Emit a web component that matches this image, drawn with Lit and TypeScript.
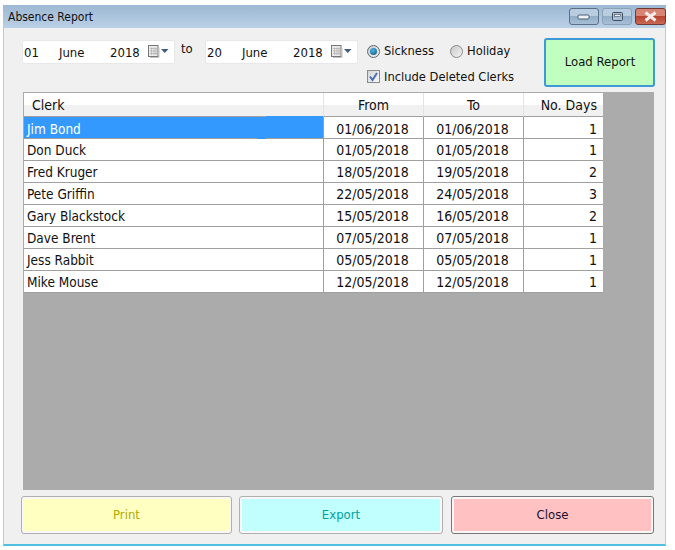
import { LitElement, html, css } from "lit";
import { customElement } from "lit/decorators.js";

const rows = [
  ["Jim Bond", "01/06/2018", "01/06/2018", "1"],
  ["Don Duck", "01/05/2018", "01/05/2018", "1"],
  ["Fred Kruger", "18/05/2018", "19/05/2018", "2"],
  ["Pete Griffin", "22/05/2018", "24/05/2018", "3"],
  ["Gary Blackstock", "15/05/2018", "16/05/2018", "2"],
  ["Dave Brent", "07/05/2018", "07/05/2018", "1"],
  ["Jess Rabbit", "05/05/2018", "05/05/2018", "1"],
  ["Mike Mouse", "12/05/2018", "12/05/2018", "1"],
];

const calendar = html`<svg class="cal" width="21" height="15" viewBox="0 0 21 15">
  <rect x="0.5" y="0.5" width="9.5" height="11" fill="#ececec" stroke="#767676"/>
  <path d="M2 3.5h7M2 6h7M2 8.5h7M3.5 2.5v7.5M6 2.5v7.5M8 2.5v7.5" stroke="#b4b4b4" stroke-width="0.8"/>
  <path d="M11 2.5v10H2" fill="none" stroke="#c4c4c4"/>
  <path d="M13 4h7.5l-3.75 4z" fill="#3f5c82"/>
</svg>`;

@customElement("app-root")
export class AppRoot extends LitElement {
  static styles = css`
    :host {
      display: block;
      width: 675px;
      height: 550px;
      background: #fff;
      font-family: "DejaVu Sans Condensed", "DejaVu Sans", sans-serif;
      font-size: 13px;
      color: #111;
      padding: 5px 0 0 3px;
      box-sizing: border-box;
    }
    .window {
      width: 663px;
      height: 541px;
      box-sizing: border-box;
      background: #f0f0f0;
      border-left: 1px solid #b5cde0;
      border-right: 1px solid #b5cde0;
      border-bottom: 2px solid #4fc1de;
      display: flex;
      flex-direction: column;
    }
    .title {
      height: 23px;
      flex: none;
      background: linear-gradient(#9db8d3, #bad0e6);
      display: flex;
      align-items: center;
      justify-content: space-between;
      padding: 0 0 0 5px;
      font-size: 12px;
      margin-left: -1px;
      margin-right: -1px;
    }
    .title-text { margin-top: 1px; }
    .controls { display: flex; gap: 3px; align-self: flex-start; margin-top: 3px; }
    .ctl {
      width: 30px;
      height: 17px;
      box-sizing: border-box;
      border: 1px solid #5b7088;
      border-radius: 3px;
      background: linear-gradient(#b8cde0 0 45%, #93aec8 50%, #a7bfd6);
      display: flex;
      align-items: center;
      justify-content: center;
    }
    .ctl.max { border-color: #8aa1b8; }
    .ctl.close {
      width: 31px;
      background: linear-gradient(#d88474 0 45%, #b8432f 50%, #c86a55);
      border-color: #6e3a33;
    }
    .body {
      flex: 1;
      display: flex;
      flex-direction: column;
      padding: 10px 10px 11px 17px;
      min-height: 0;
    }
    .top { display: flex; height: 54px; flex: none; }
    .date {
      flex: none;
      width: 153px;
      height: 24px;
      margin: 2px 0 0 1px;
      box-sizing: border-box;
      background: #fff;
      border: 1px solid #e8e8e8;
      border-radius: 2px;
      display: flex;
      align-items: center;
      padding-left: 1px;
    }
    .date span { display: block; flex: none; }
    .d { width: 35px; }
    .m { width: 51px; }
    .y { width: 38px; }
    .cal { flex: none; margin-left: 0; }
    .to { flex: none; width: 29px; padding: 3px 0 0 6px; box-sizing: border-box; }
    .opts {
      flex: none;
      width: 177px;
      margin-left: 9px;
      display: grid;
      grid-template-columns: 83px 1fr;
      grid-auto-rows: 25px;
    }
    .opt { display: flex; align-items: center; gap: 4px; white-space: nowrap; font-size: 12.8px; }
    .span2 { grid-column: 1 / 3; padding-top: 2px; }
    .radio {
      width: 13px;
      height: 13px;
      margin-top: 1px;
      box-sizing: border-box;
      border-radius: 50%;
      border: 1px solid #8b8b8b;
      background: linear-gradient(135deg, #c8c8c8, #f4f4f4);
      display: flex;
      align-items: center;
      justify-content: center;
      flex: none;
    }
    .radio.on { border-color: #5e6a72; }
    .radio.on i {
      display: block;
      width: 7px;
      height: 7px;
      border-radius: 50%;
      background: radial-gradient(circle at 40% 35%, #4fb4e4, #0b4f80);
    }
    .check {
      width: 13px;
      height: 13px;
      box-sizing: border-box;
      border: 1px solid #8b8b8b;
      background: linear-gradient(135deg, #d4d4d4, #f8f8f8);
      flex: none;
      display: flex;
    }
    .load {
      flex: none;
      width: 111px;
      height: 49px;
      box-sizing: border-box;
      border: 2px solid #3d9ad6;
      border-radius: 3px;
      background: #c1ffc1;
      display: flex;
      align-items: center;
      justify-content: center;
      padding: 0 0 2px 1px;
    }
    .grid-area {
      height: 398px;
      flex: none;
      margin: 0 1px 0 2px;
      background: #ababab;
      padding: 1px 0 0 1px;
      box-sizing: border-box;
    }
    .table {
      width: 579px;
      display: grid;
      grid-template-columns: 300px 100px 100px 79px;
      grid-template-rows: 24px;
      grid-auto-rows: 22px;
      background: #fff;
    }
    .h {
      box-sizing: border-box;
      background: linear-gradient(#fff 0 50%, #f1f1f1 50%);
      border-right: 1px solid #e3e3e3;
      border-bottom: 1px solid #a0a0a0;
      display: flex;
      align-items: center;
      justify-content: center;
      font-size: 14px;
    }
    .h.left { justify-content: flex-start; padding-left: 8px; }
    .h.right { justify-content: flex-end; padding-right: 6px; border-right: none; }
    .c {
      box-sizing: border-box;
      border-bottom: 1px solid #a0a0a0;
      border-right: 1px solid #a0a0a0;
      display: flex;
      align-items: center;
      justify-content: center;
      padding: 1px 2px 0 0;
      font-size: 14px;
    }
    .c.left { justify-content: flex-start; padding-left: 3px; font-size: 13.5px; }
    .c.right { justify-content: flex-end; padding-right: 6px; border-right: none; }
    .c.sel { background: #3399ff; color: #fff; position: relative; padding-top: 3px; }
    .c.sel::before {
      content: "";
      position: absolute;
      left: 242px;
      right: 0;
      top: -1px;
      height: 1px;
      background: #3399ff;
    }
    .c.sel::after {
      content: "";
      position: absolute;
      left: 233px;
      width: 9px;
      bottom: -1px;
      height: 1px;
      background: #3399ff;
    }
    .c.first { padding-top: 3px; }
    .bottom {
      display: grid;
      grid-template-columns: 211px 204px 204px;
      column-gap: 7px;
      margin-top: 6px;
    }
    .btn {
      height: 38px;
      box-sizing: border-box;
      border: 1px solid #b0b0b0;
      border-radius: 3px;
      padding: 2px;
      background: #f7f7f7;
      display: flex;
    }
    .btn span {
      flex: 1;
      display: flex;
      align-items: center;
      justify-content: center;
      padding-bottom: 1px;
    }
    .print span { background: #ffffc1; color: #b3a800; }
    .export span { background: #c1ffff; color: #00a0a0; }
    .close-b { border-color: #777; margin-left: 1px; }
    .close-b span { background: #ffc1c1; color: #1a1030; }
  `;

  private date(d: string) {
    return html`<div class="date">
      <span class="d">${d}</span><span class="m">June</span><span class="y">2018</span>${calendar}
    </div>`;
  }

  render() {
    return html`<div class="window">
      <div class="title">
        <span class="title-text">Absence Report</span>
        <div class="controls">
          <div class="ctl">
            <svg width="14" height="6" viewBox="0 0 14 6"><rect x="1" y="1" width="11" height="4" rx="1" fill="#eef2f6" stroke="#4c5e72"/></svg>
          </div>
          <div class="ctl max">
            <svg width="11" height="9" viewBox="0 0 11 9"><rect x="0.5" y="0.5" width="10" height="8" rx="1" fill="#a9bfd5" stroke="#3e4e60"/><rect x="2.5" y="2.5" width="6" height="2" fill="#eef2f6" stroke="#3e4e60" stroke-width="0.6"/></svg>
          </div>
          <div class="ctl close">
            <svg width="15" height="11" viewBox="0 0 15 11"><path d="M2.5 1.5l10 8M12.5 1.5l-10 8" stroke="#f6ecea" stroke-width="3"/></svg>
          </div>
        </div>
      </div>
      <div class="body">
        <div class="top">
          ${this.date("01")}
          <div class="to">to</div>
          ${this.date("20")}
          <div class="opts">
            <div class="opt"><div class="radio on"><i></i></div>Sickness</div>
            <div class="opt"><div class="radio"></div>Holiday</div>
            <div class="opt span2">
              <div class="check">
                <svg width="11" height="11" viewBox="0 0 11 11"><path d="M2 5.5l2.5 3.5 4.5-7" fill="none" stroke="#4a6fb5" stroke-width="2"/></svg>
              </div>
              Include Deleted Clerks
            </div>
          </div>
          <div class="load">Load Report</div>
        </div>
        <div class="grid-area">
          <div class="table">
            <div class="h left">Clerk</div><div class="h">From</div><div class="h">To</div><div class="h right">No. Days</div>
            ${rows.map(
              (r, i) => html`
                <div class="c left ${i === 0 ? "sel" : ""}">${r[0]}</div>
                <div class="c ${i === 0 ? "first" : ""}">${r[1]}</div>
                <div class="c ${i === 0 ? "first" : ""}">${r[2]}</div>
                <div class="c right ${i === 0 ? "first" : ""}">${r[3]}</div>
              `
            )}
          </div>
        </div>
        <div class="bottom">
          <div class="btn print"><span>Print</span></div>
          <div class="btn export"><span>Export</span></div>
          <div class="btn close-b"><span>Close</span></div>
        </div>
      </div>
    </div>`;
  }
}
